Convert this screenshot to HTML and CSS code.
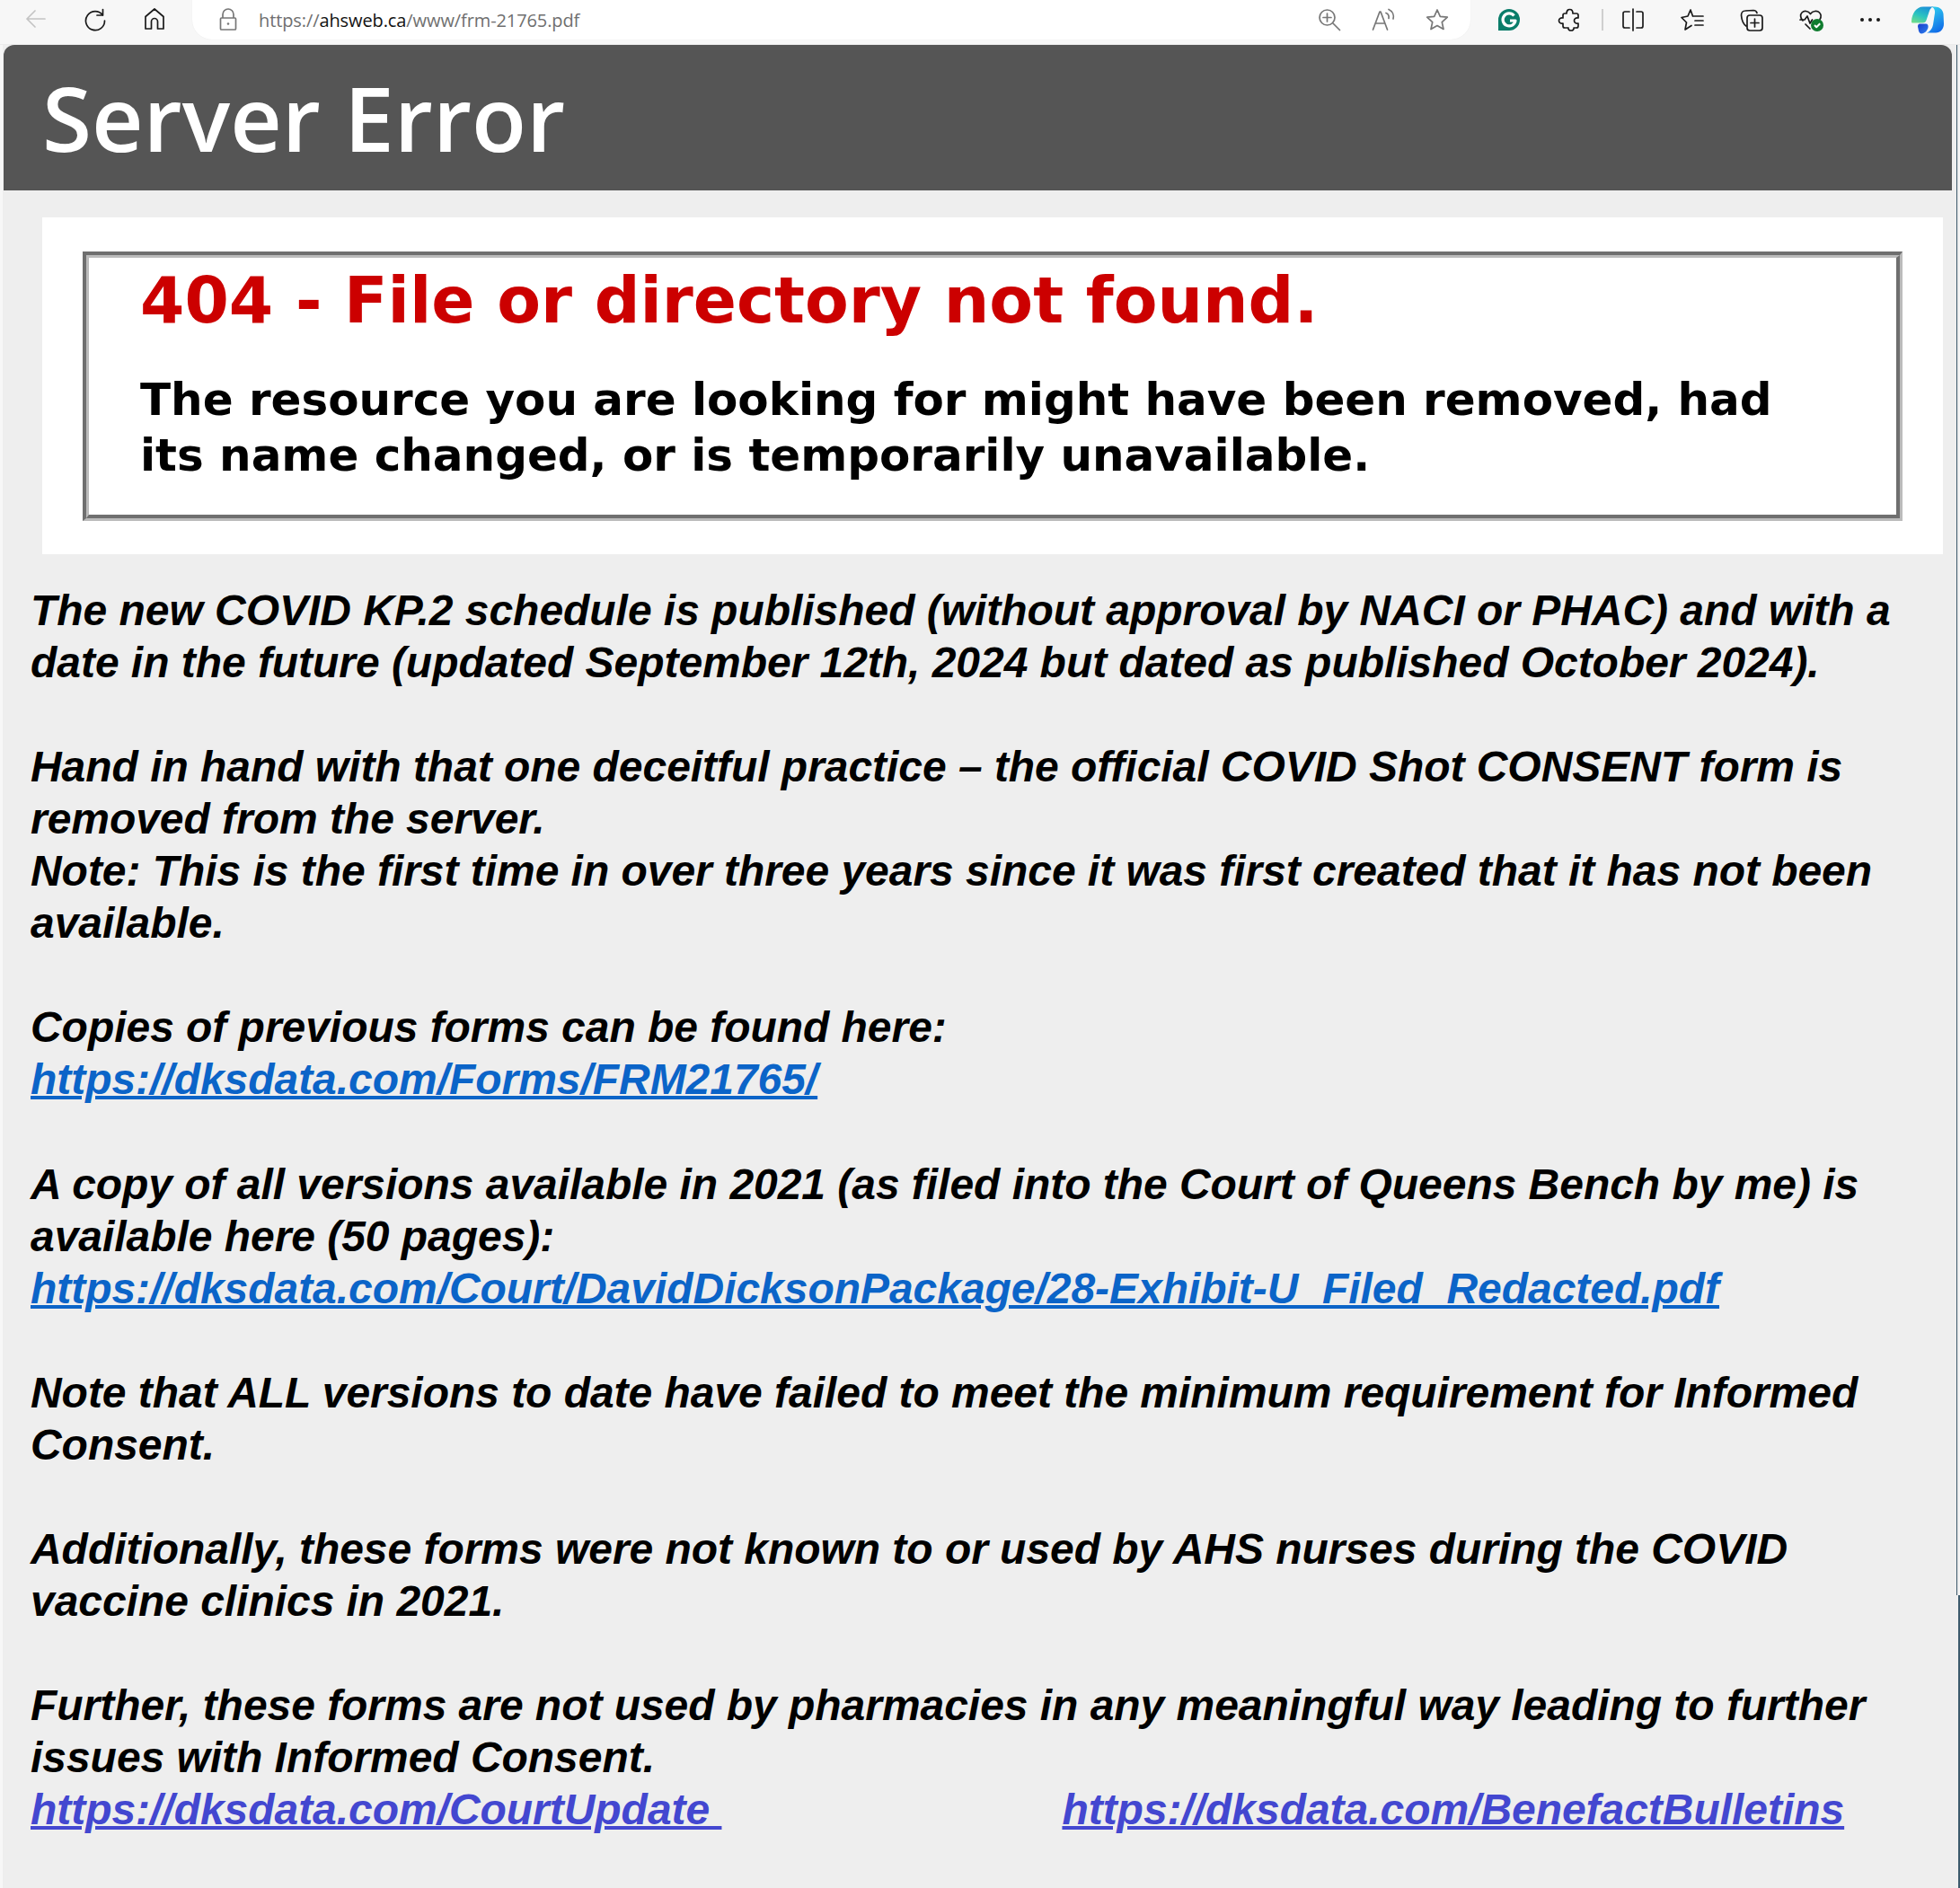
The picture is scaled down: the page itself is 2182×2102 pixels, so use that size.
FILE: index.html
```html
<!DOCTYPE html>
<html lang="en">
<head>
<meta charset="utf-8">
<title>Server Error</title>
<link rel="stylesheet" href="styles.css">
</head>
<body>
<svg class="sprite" width="0" height="0" aria-hidden="true">
  <defs>
    <linearGradient id="cpA" x1="0.7" y1="0" x2="0.2" y2="1"><stop offset="0" stop-color="#1b8fd8"/><stop offset="0.55" stop-color="#2bc4c0"/><stop offset="1" stop-color="#6fdc8c"/></linearGradient>
    <linearGradient id="cpB" x1="0.3" y1="0" x2="0.7" y2="1"><stop offset="0" stop-color="#2fd0ee"/><stop offset="1" stop-color="#1068e8"/></linearGradient>
    <linearGradient id="cpC" x1="0" y1="0" x2="1" y2="1"><stop offset="0" stop-color="#1a3fc8"/><stop offset="1" stop-color="#2a7ff0"/></linearGradient>
  </defs>
</svg>
<header class="toolbar">
  <div class="nav">
    <svg class="ic ic-back" viewBox="0 0 28 28"><path d="M24 14H4M13 5l-9 9 9 9"/></svg>
    <svg class="ic" viewBox="0 0 28 28"><path d="M22.500 3.500V10H16M22.500 10A10.500 10.500 0 1 0 24.500 16"/></svg>
    <svg class="ic" viewBox="0 0 28 28"><path d="M14 3 4 11.500V25h6.500v-8a3.500 3.500 0 0 1 7 0v8H24V11.500Z"/></svg>
  </div>
  <div class="address">
    <svg class="ic ic-gray lock" viewBox="0 0 24 28"><path d="M6 12V8a6 6 0 0 1 12 0v4M4.500 12h15a1 1 0 0 1 1 1v11a1 1 0 0 1-1 1h-15a1 1 0 0 1-1-1V13a1 1 0 0 1 1-1Z"/><circle class="fill-dot" cx="12" cy="18.500" r="1.300"/></svg>
    <span class="url">https://<b>ahsweb.ca</b>/www/frm-21765.pdf</span>
    <div class="addr-tools">
      <svg class="ic ic-gray" viewBox="0 0 28 28"><circle cx="11.500" cy="11.500" r="8.500"/><path d="M11.500 7v9M7 11.500h9M18 18l7.500 7.500"/></svg>
      <svg class="ic ic-gray" viewBox="0 0 28 28"><path d="M2.500 25 10 5h1l7.500 20M5.500 18h10M17 6.500c2.500 1 3.500 3.500 3 6M20 2.500c4.500 2 6 6.500 5 10.500"/></svg>
      <svg class="ic ic-gray" viewBox="0 0 28 28"><path d="m14 3 3.300 7.400 8 .8-6 5.400 1.700 7.900-7-4-7 4 1.700-7.900-6-5.400 8-.8Z"/></svg>
    </div>
  </div>
  <div class="tools">
    <svg class="ic ic-g" viewBox="0 0 26 26"><path class="fill-g" d="M13 1a12 12 0 0 1 0 24H1V13A12 12 0 0 1 13 1Z"/><path class="stroke-w" d="M18.500 8.500A7 7 0 1 0 20 14h-6"/></svg>
    <svg class="ic" viewBox="0 0 28 28"><path d="M11 7c0-6 7-6 7 0h4a2 2 0 0 1 2 2v3c-6-1-6 7 0 6v3a2 2 0 0 1-2 2h-3c1 4-7 4-6 0H9a2 2 0 0 1-2-2v-3c-6 1-6-7 0-6V9a2 2 0 0 1 2-2Z"/></svg>
    <span class="divider"></span>
    <svg class="ic" viewBox="0 0 28 28"><path d="M14 2v24M10 5H5a2 2 0 0 0-2 2v14a2 2 0 0 0 2 2h5M18 5h5a2 2 0 0 1 2 2v14a2 2 0 0 1-2 2h-5"/></svg>
    <svg class="ic" viewBox="0 0 28 28"><path d="M15 10H26M17 15H26M17 20H26M14.500 10 12 3 9 10l-7 1.500 5.500 5.500L6 25l7-4.500"/></svg>
    <svg class="ic" viewBox="0 0 28 28"><path d="M8 21C5 19 3 15 2.500 9c0-3 2-5 4.500-5l9-.5c2 0 3.500 1 4 3"/><rect x="9" y="9" width="17" height="17" rx="3"/><path d="M17.500 13v9M13 17.500h9"/></svg>
    <svg class="ic ic-health" viewBox="0 0 28 28"><path d="M5 15C2 12 2 8 4 6c2.500-2.500 7-2 9.500 1.500C16 4 21 3.500 23.500 6c2 2 2 5 .5 7.500M2 14h5l3-4 3 8 2.500-4M8 19l5 5"/><circle class="fill-ok" cx="21" cy="20" r="7"/><path class="stroke-w thin" d="m18 20 2.200 2.200 4-4"/></svg>
    <div class="dots"><i></i><i></i><i></i></div>
    <svg class="copilot" viewBox="0 0 36 32">
      <path fill="url(#cpB)" d="M22 1h4c5 0 9 3 9.500 8l.5 11c0 6-4 10-9 10H17c3-1 6-4 7-9l2-13c.5-3-1-6-4-7Z"/>
      <path fill="url(#cpC)" d="M9 20h7c2 0 3 2 2.500 4C18 27 15 31 11 31c-1 0-2.500-1-3-3l-1-5c0-2 1-3 2-3Z"/>
      <path fill="url(#cpA)" d="M13 1h12c-3 0-4.500 3-5.500 6l-3 9c-.5 2-2 3-4 3H1c-1 0-1-1-1-2C.500 9 5 1 13 1Z"/>
    </svg>
  </div>
</header>
<div class="window">
  <div class="titlebar"><h1>Server Error</h1></div>
  <main class="content">
    <section class="panel">
      <div class="frame">
        <div class="frame-inner">
          <h2>404 - File or directory not found.</h2>
          <h3>The resource you are looking for might have been removed, had its name changed, or is temporarily unavailable.</h3>
        </div>
      </div>
    </section>
    <article class="notes">
      <p>The new COVID KP.2 schedule is published (without approval by NACI or PHAC) and with a<br>date in the future (updated September 12th, 2024 but dated as published October 2024).</p>
      <p>Hand in hand with that one deceitful practice – the official COVID Shot CONSENT form is<br>removed from the server.<br>Note: This is the first time in over three years since it was first created that it has not been<br>available.</p>
      <p>Copies of previous forms can be found here:<br><a class="link" href="#">https://dksdata.com/Forms/FRM21765/</a></p>
      <p>A copy of all versions available in 2021 (as filed into the Court of Queens Bench by me) is<br>available here (50 pages):<br><a class="link" href="#">https://dksdata.com/Court/DavidDicksonPackage/28-Exhibit-U_Filed_Redacted.pdf</a></p>
      <p>Note that ALL versions to date have failed to meet the minimum requirement for Informed<br>Consent.</p>
      <p>Additionally, these forms were not known to or used by AHS nurses during the COVID<br>vaccine clinics in 2021.</p>
      <p class="last">Further, these forms are not used by pharmacies in any meaningful way leading to further<br>issues with Informed Consent.</p>
      <div class="links"><a class="link visited first" href="#">https://dksdata.com/CourtUpdate&nbsp;</a><a class="link visited" href="#">https://dksdata.com/BenefactBulletins</a></div>
    </article>
  </main>
</div>
</body>
</html>
```

FILE: styles.css
```css
* { box-sizing: border-box; }
html, body { margin: 0; padding: 0; }
body {
  width: 2182px;
  height: 2102px;
  overflow: hidden;
  background: #f7f7f7;
  font-family: "Liberation Sans", Arial, sans-serif;
}
.sprite { display: block; height: 0; }

/* browser chrome */
.toolbar {
  display: flex;
  align-items: flex-start;
  height: 50px;
  background: #f7f7f7;
  border-bottom: 1px solid #ececec;
}
.ic {
  width: 28px;
  height: 28px;
  fill: none;
  stroke: #1a1a1a;
  stroke-width: 1.700;
  stroke-linecap: round;
  stroke-linejoin: round;
  flex: none;
}
.ic-gray { stroke: #777; }
.ic-back { stroke: #c4c4c4; }
.fill-dot { fill: #777; stroke: none; }
.fill-g { fill: #0a7d6a; stroke: none; }
.fill-ok { fill: #107c2f; stroke: none; }
.stroke-w { stroke: #fff; stroke-width: 3.200; stroke-linecap: butt; }
.stroke-w.thin { stroke-width: 2; }
.nav {
  display: flex;
  gap: 38px;
  width: 214px;
  padding: 7px 0 0 26px;
}
.address {
  display: flex;
  align-items: center;
  width: 1423px;
  height: 44px;
  background: #fff;
  border-radius: 0 0 22px 22px / 0 0 22px 22px;
  padding: 0 23px 0 28px;
  box-shadow: 0 0 1px #e4e4e4;
}
.lock { width: 24px; height: 28px; }
.url {
  margin-left: 22px;
  font-family: "Open Sans", sans-serif;
  font-size: 20px;
  letter-spacing: -0.1px;
  color: #6f6f6f;
}
.url b { font-weight: 400; color: #111; }
.addr-tools {
  margin-left: auto;
  display: flex;
  gap: 32px;
}
.tools {
  display: flex;
  align-items: center;
  height: 44px;
  padding-left: 30px;
  gap: 38px;
}
.ic-g { width: 26px; height: 26px; margin-right: 2px; }
.divider {
  width: 2px;
  height: 24px;
  background: #cfcfcf;
  margin: 0 -19px 0 -16px;
}
.dots {
  display: flex;
  gap: 5px;
  width: 28px;
  justify-content: center;
}
.dots i {
  width: 4px;
  height: 4px;
  border-radius: 50%;
  background: #1a1a1a;
}
.copilot { width: 36px; height: 33px; margin-left: -6px; flex: none; }

/* page */
.window {
  position: relative;
  width: 2178px;
  height: 2052px;
  margin-left: 3px;
  padding-left: 1px;
  background: #eee;
}
.window::before {
  content: "";
  position: absolute;
  top: 0;
  left: 2175px;
  width: 1px;
  height: 1726px;
  background: #3d5a6c;
}
.window::after {
  content: "";
  position: absolute;
  top: 1726px;
  left: 2177px;
  width: 2px;
  height: 326px;
  background: #3d5a6c;
}
.titlebar {
  width: 2169px;
  height: 162px;
  background: #555;
  border-radius: 12px 12px 0 0;
  padding-left: 43px;
}
h1 {
  margin: 0;
  font-family: "Open Sans", sans-serif;
  font-weight: 600;
  font-size: 100px;
  line-height: 160px;
  color: #fff;
}
.content { padding-top: 30px; }
.panel {
  margin-left: 43px;
  width: 2116px;
  height: 375px;
  background: #fff;
  padding: 38px 45px 0;
}
.frame {
  height: 300px;
  border-style: solid;
  border-width: 4px 3px 3px 4px;
  border-color: #6f6f6f #bbb #bbb #6f6f6f;
}
.frame-inner {
  height: 100%;
  border-style: solid;
  border-width: 3px 4px 4px 3px;
  border-color: #bbb #6f6f6f #6f6f6f #bbb;
  padding: 4px 57px 0;
  font-family: "DejaVu Sans", sans-serif;
  font-weight: 700;
}
h2 {
  margin: 0;
  font-size: 71px;
  line-height: 88px;
  color: #c00;
}
h3 {
  margin: 35px 0 0;
  font-size: 50px;
  line-height: 62px;
  letter-spacing: -0.03px;
  color: #000;
}
.notes {
  margin: 34px 0 0 30px;
  font-size: 48px;
  line-height: 58px;
  letter-spacing: -0.04px;
  font-weight: 700;
  font-style: italic;
  color: #000;
}
.notes p { margin: 0 0 58.200px; white-space: nowrap; }
.notes p.last { margin-bottom: 0; }
.link {
  color: #0b64c8;
  text-decoration: underline;
  text-decoration-thickness: 4px;
}
.link.visited { color: #4347d0; }
.links { display: flex; }
.link.first { margin-right: 379px; }
```
